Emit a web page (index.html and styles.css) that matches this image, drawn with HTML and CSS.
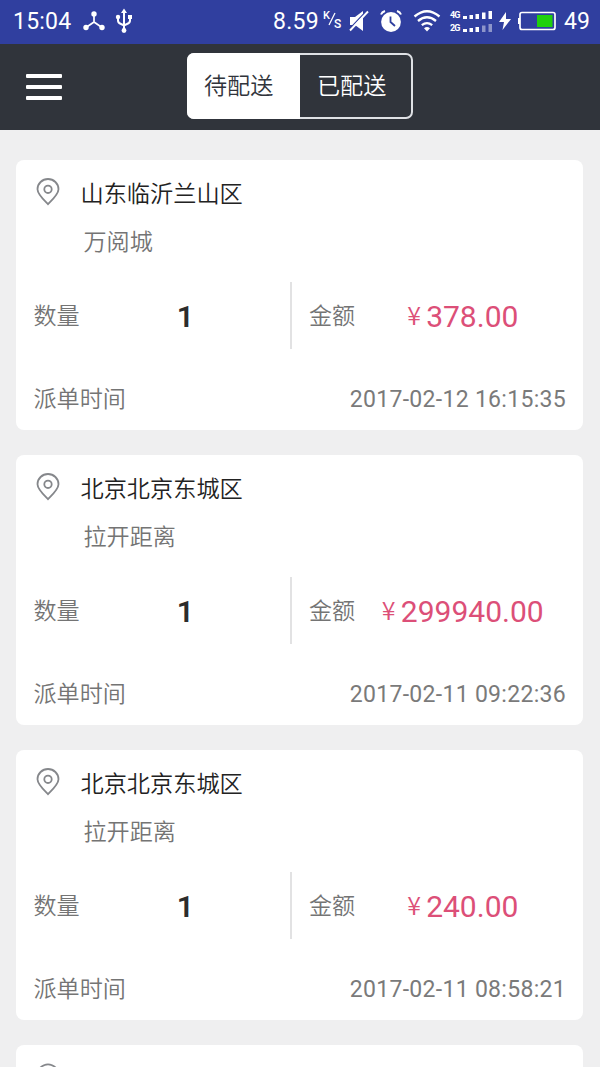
FILE: index.html
```html
<!DOCTYPE html>
<html lang="zh-CN">
<head>
<meta charset="utf-8">
<title>配送</title>
<link rel="stylesheet" href="styles.css">
</head>
<body>
<svg class="defs" width="0" height="0">
  <symbol id="pin" viewBox="0 0 24 28">
    <path d="M12 26.2C10.500 24.500 1.500 16.500 1.500 11.200a10.500 10.200 0 0 1 21 0C22.500 16.500 13.500 24.500 12 26.200Z"/>
    <circle cx="12" cy="11.300" r="3.700"/>
  </symbol>
</svg>
<header class="status">
  <div class="status-left">
    <span class="clock">15:04</span>
    <svg class="share" width="22" height="20" viewBox="0 0 22 20"><path d="M11 3v8L3 16.500M11 11l8 5.500" fill="none" stroke="#fff" stroke-width="1.700"/><g fill="#fff"><circle cx="11" cy="3" r="2.700"/><circle cx="3" cy="16.500" r="2.700"/><circle cx="19" cy="16.500" r="2.700"/></g></svg>
    <svg class="usb" width="18" height="26" viewBox="0 0 18 26"><path d="M9 4v18M3 9v3.500q0 2.500 3 3.500l3 1.500l3-1.500q3-1 3-3.500V9" fill="none" stroke="#fff" stroke-width="2"/><path d="M9 .5l3 4.500H6zM13 7h4v4h-4z" fill="#fff"/><circle cx="3" cy="9" r="2.200" fill="#fff"/><circle cx="9" cy="22.500" r="2.400" fill="#fff"/></svg>
  </div>
  <div class="status-right">
    <span class="speed">8.59</span>
    <span class="unit"><span class="unit-k">K</span><svg width="8" height="14" viewBox="0 0 8 14"><path d="M1 13L7 1" stroke="#fff" stroke-width="1.300"/></svg><span class="unit-s">S</span></span>
    <svg class="mute" width="20" height="22" viewBox="0 0 20 22"><path d="M1 7h5l8-6v20l-8-6H1z" fill="#fff"/><path d="M0 19.500L18 0.500" stroke="#303f9f" stroke-width="1.500"/><path d="M1 20.500L19 1.500" stroke="#fff" stroke-width="1.900"/></svg>
    <svg class="alarm" width="22" height="22" viewBox="0 0 22 22"><circle cx="11" cy="12" r="9.900" fill="#fff"/><path d="M1 4.500q1-2.500 4-3.500M21 4.500q-1-2.500-4-3.500" stroke="#fff" stroke-width="2" fill="none"/><path d="M10.500 6.500V12l4.500 4" fill="none" stroke="#303f9f" stroke-width="1.800"/></svg>
    <svg class="wifi" width="28" height="22" viewBox="0 0 28 22"><g fill="none" stroke="#fff" stroke-width="2.300"><path d="M1.500 6.500q12.500-10.500 25 0"/><path d="M5 11q9-7.500 18 0"/><path d="M8.800 15.200q5.200-4.200 10.400 0"/></g><path d="M11 18.300q3-2.500 6 0L14 21.500z" fill="#fff"/></svg>
    <div class="signals">
      <div class="signal"><span class="net">4G</span><svg width="30" height="8" viewBox="0 0 30 8" fill="#fff"><path d="M0 5h4v3H0zM6.500 4h3.500v4H6.500zM12.500 3H16v5h-3.500zM19 1.500h3.500V8H19zM25.500 0H29v8h-3.500z"/></svg></div>
      <div class="signal"><span class="net">2G</span><svg width="30" height="8" viewBox="0 0 30 8" fill="#fff"><path d="M0 5h4v3H0zM6.500 4h3.500v4H6.500zM12.500 3H16v5h-3.500z"/><path d="M19 1.500h3.500V8H19zM25.500 0H29v8h-3.500z" opacity=".45"/></svg></div>
    </div>
    <svg class="bolt" width="12" height="18" viewBox="0 0 12 18"><path d="M7 0L0 10h5l-1.500 8L12 7H7z" fill="#fff"/></svg>
    <svg class="battery" width="38" height="20" viewBox="0 0 38 20"><rect x="2" y="1.500" width="35" height="17" rx="2" fill="none" stroke="#fff" stroke-width="1.700"/><path d="M0 7h2v6H0z" fill="#fff"/><path d="M19 4h15.500v12H19z" fill="#20d00c"/></svg>
    <span class="level">49</span>
  </div>
</header>
<nav class="bar">
  <div class="menu"><i></i><i></i><i></i></div>
  <div class="tabs"><span class="tab active">待配送</span><span class="tab">已配送</span></div>
</nav>
<main class="list">
  <article class="card">
    <div class="place"><svg class="pin"><use href="#pin"/></svg><h2>山东临沂兰山区</h2></div>
    <p class="detail">万阅城</p>
    <div class="figures">
      <div class="count"><span class="label">数量</span><b>1</b></div>
      <div class="amount"><span class="label">金额</span><span class="price"><span class="yen">¥</span>378.00</span></div>
    </div>
    <div class="time"><span class="label">派单时间</span><time>2017-02-12 16:15:35</time></div>
  </article>
  <article class="card">
    <div class="place"><svg class="pin"><use href="#pin"/></svg><h2>北京北京东城区</h2></div>
    <p class="detail">拉开距离</p>
    <div class="figures">
      <div class="count"><span class="label">数量</span><b>1</b></div>
      <div class="amount"><span class="label">金额</span><span class="price"><span class="yen">¥</span>299940.00</span></div>
    </div>
    <div class="time"><span class="label">派单时间</span><time>2017-02-11 09:22:36</time></div>
  </article>
  <article class="card">
    <div class="place"><svg class="pin"><use href="#pin"/></svg><h2>北京北京东城区</h2></div>
    <p class="detail">拉开距离</p>
    <div class="figures">
      <div class="count"><span class="label">数量</span><b>1</b></div>
      <div class="amount"><span class="label">金额</span><span class="price"><span class="yen">¥</span>240.00</span></div>
    </div>
    <div class="time"><span class="label">派单时间</span><time>2017-02-11 08:58:21</time></div>
  </article>
  <article class="card peek">
    <svg class="pin" viewBox="0 0 24 4"><path d="M4 5Q7.500 1.300 12 1.300T20 5"/></svg>
  </article>
</main>
</body>
</html>
```
FILE: styles.css
```css
* { box-sizing: border-box; }
body {
  margin: 0;
  height: 1067px;
  overflow: hidden;
  display: flex;
  flex-direction: column;
  background: #efeff0;
  font-family: Roboto, "Noto Sans CJK SC", sans-serif;
  font-size: 23.1px;
  font-weight: 350;
  white-space: nowrap;
}
.defs { position: absolute; }
svg { display: block; flex: none; }

.status {
  flex: none;
  height: 44px;
  padding: 0 10px 2px 13px;
  display: flex;
  justify-content: space-between;
  align-items: center;
  background: #303f9f;
  color: #fff;
  font-size: 23px;
  font-weight: 400;
  line-height: 42px;
}
.status-left, .status-right { display: flex; align-items: center; }
.clock { width: 70px; padding-top: 2px; letter-spacing: .2px; }
.usb { margin-left: 10px; }
.speed { width: 50px; padding-top: 2px; letter-spacing: .3px; }
.unit { display: flex; width: 26px; font-size: 11px; line-height: 12px; font-weight: 500; }
.unit-k { margin-top: -2px; }
.unit svg { margin: 0 -2px; }
.unit-s { margin-top: 6px; font-size: 12px; }
.alarm { margin-left: 11px; }
.wifi { margin-left: 11px; }
.signals { width: 43px; margin-left: 9px; display: grid; gap: 5px; }
.signal { display: flex; align-items: flex-end; height: 8px; }
.net { width: 13px; font-size: 9px; line-height: 8px; font-weight: 700; letter-spacing: -.8px; }
.bolt { margin-left: 6px; }
.battery { margin-left: 7px; }
.level { width: 26px; margin-left: 8px; padding-top: 2px; }

.bar {
  flex: none;
  height: 86px;
  display: grid;
  grid-template-columns: 187px 226px;
  align-items: center;
  background: #30343b;
}
.menu { display: grid; gap: 7px; width: 36px; margin: 0 0 2px 26px; padding-top: 1px; }
.menu i { height: 4px; border-radius: 1px; background: #fff; }
.tabs {
  height: 66px;
  margin-bottom: 2px;
  display: grid;
  grid-template-columns: 1fr 1fr;
  grid-template-rows: 62px;
  border: 2px solid #dfe1e5;
  border-radius: 7px;
  color: #fff;
}
.tab { padding: 2px 0 0 17px; line-height: 60px; }
.tab.active { margin: -2px 0 -2px -2px; padding: 4px 0 0 17px; border-radius: 7px 0 0 7px; background: #fff; color: #30343b; }
.tab { padding-top: 2px; }

.list {
  padding: 30px 17px 0 16px;
  display: grid;
  gap: 25px;
}
.card {
  height: 270px;
  padding: 9px 17px 0 18px;
  border-radius: 8px;
  background: #fff;
  color: #747474;
}
.place { display: flex; align-items: center; height: 48px; }
.pin { width: 24px; height: 28px; margin: 0 20.5px 2px 2px; fill: none; stroke: #85878b; stroke-width: 1.8; }
h2 { margin: 0; padding-bottom: 3px; font-size: 23.2px; font-weight: 350; color: #222; }
.detail { margin: 0; padding: 1px 0 0 49.5px; height: 49px; line-height: 50px; }
.figures { height: 67px; margin-top: 16px; display: grid; grid-template-columns: 258px 1fr; }
.label { margin-left: -.5px; padding-bottom: 4px; }
.count { display: flex; align-items: center; border-right: 2px solid #e2e2e3; }
.count b { margin-left: 97px; padding-top: 1px; font-size: 30px; font-weight: 600; color: #2c2c2c; }
.amount { display: grid; grid-template-columns: 46px 1fr; align-items: center; padding-left: 17.5px; }
.price { text-align: center; padding: 2px 0 0 4px; font-size: 30px; font-weight: 400; color: #dc4f78; }
.yen { display: inline-block; width: 19px; text-align: left; font-family: "Noto Sans CJK SC", sans-serif; font-size: 25px; font-weight: 350; line-height: 30px; transform: translateY(-2px); }
.time { height: 63px; margin-top: 18px; display: flex; justify-content: space-between; align-items: center; }
time { padding-top: 1px; font-size: 23px; font-weight: 400; letter-spacing: .3px; color: #7a7a7a; }
.peek { height: 22px; padding-top: 18px; border-radius: 8px 8px 0 0; }
.peek .pin { height: 4px; margin-bottom: 0; }
```
